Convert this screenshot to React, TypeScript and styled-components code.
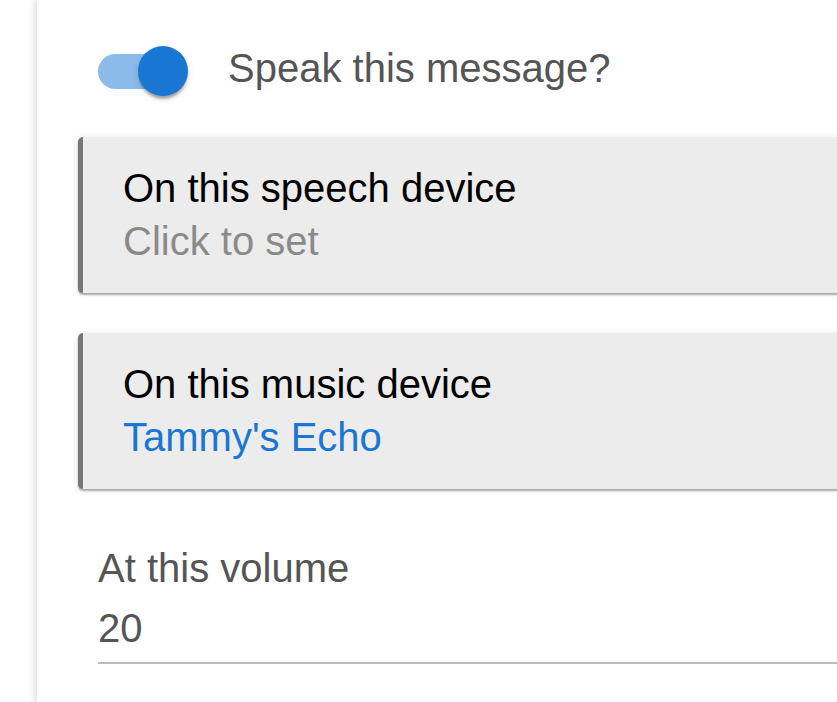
import React from "react";
import styled, { createGlobalStyle } from "styled-components";

const Global = createGlobalStyle`
  html, body {
    margin: 0;
    padding: 0;
    background: #ffffff;
    overflow: hidden;
    font-family: "Liberation Sans", Arial, sans-serif;
  }
`;

const Page = styled.div`
  width: 837px;
  height: 702px;
  overflow: hidden;
  background: #ffffff;
  padding-left: 37px;
  box-sizing: border-box;
`;

const Panel = styled.div`
  width: 900px;
  height: 702px;
  background: #ffffff;
  box-shadow: -3px 0 6px rgba(0, 0, 0, 0.12);
  padding: 40px 0 0 41px;
  box-sizing: border-box;
  display: flex;
  flex-direction: column;
`;

const ToggleRow = styled.div`
  display: flex;
  align-items: flex-start;
  gap: 40px;
  padding-left: 20px;
  margin-bottom: 41px;
`;

const SwitchBox = styled.div`
  position: relative;
  width: 90px;
  height: 50px;
  margin-top: 6px;
  flex-shrink: 0;
`;

const Track = styled.div<{ $on: boolean }>`
  position: absolute;
  left: 0;
  top: 7.5px;
  width: 85px;
  height: 35px;
  border-radius: 17.5px;
  background: ${(p) => (p.$on ? "#8cbbe9" : "#bdbdbd")};
`;

const Thumb = styled.div<{ $on: boolean }>`
  position: absolute;
  top: 0;
  left: ${(p) => (p.$on ? "40px" : "0")};
  width: 50px;
  height: 50px;
  border-radius: 50%;
  background: ${(p) => (p.$on ? "#1976d2" : "#fafafa")};
  box-shadow: 0 5px 3px -2px rgba(0, 0, 0, 0.2), 0 2.5px 2.5px rgba(0, 0, 0, 0.14),
    0 2.5px 7.5px rgba(0, 0, 0, 0.12);
`;

const ToggleLabel = styled.span`
  font-size: 40px;
  line-height: 53px;
  margin-top: 2px;
  color: #555555;
`;

const Card = styled.div`
  background: #ececec;
  border-left: 5px solid #777777;
  border-radius: 5px;
  padding: 25px 40px;
  box-shadow: 0 2px 2px rgba(0, 0, 0, 0.32), 0 0 8px rgba(0, 0, 0, 0.07);
  margin-bottom: 40px;
  display: flex;
  flex-direction: column;
`;

const CardTitle = styled.div`
  font-size: 40px;
  line-height: 53px;
  color: #000000;
`;

const CardValue = styled.div<{ $set: boolean }>`
  font-size: 40px;
  line-height: 53px;
  color: ${(p) => (p.$set ? "#1976d2" : "#8a8a8a")};
`;

const Field = styled.div`
  margin-top: 13px;
  margin-left: 20px;
  display: flex;
  flex-direction: column;
`;

const FieldLabel = styled.div`
  font-size: 40px;
  line-height: 53px;
  color: #555555;
`;

const FieldValue = styled.div`
  font-size: 40px;
  line-height: 53px;
  color: #555555;
  margin-top: 7px;
  padding-bottom: 7px;
  border-bottom: 2px solid #bdbdbd;
`;

const devices = [
  { title: "On this speech device", value: "Click to set", set: false },
  { title: "On this music device", value: "Tammy's Echo", set: true },
];

export default function App() {
  return (
    <>
      <Global />
      <Page>
        <Panel>
          <ToggleRow>
            <SwitchBox>
              <Track $on />
              <Thumb $on />
            </SwitchBox>
            <ToggleLabel>Speak this message?</ToggleLabel>
          </ToggleRow>
          {devices.map((d) => (
            <Card key={d.title}>
              <CardTitle>{d.title}</CardTitle>
              <CardValue $set={d.set}>{d.value}</CardValue>
            </Card>
          ))}
          <Field>
            <FieldLabel>At this volume</FieldLabel>
            <FieldValue>20</FieldValue>
          </Field>
        </Panel>
      </Page>
    </>
  );
}
